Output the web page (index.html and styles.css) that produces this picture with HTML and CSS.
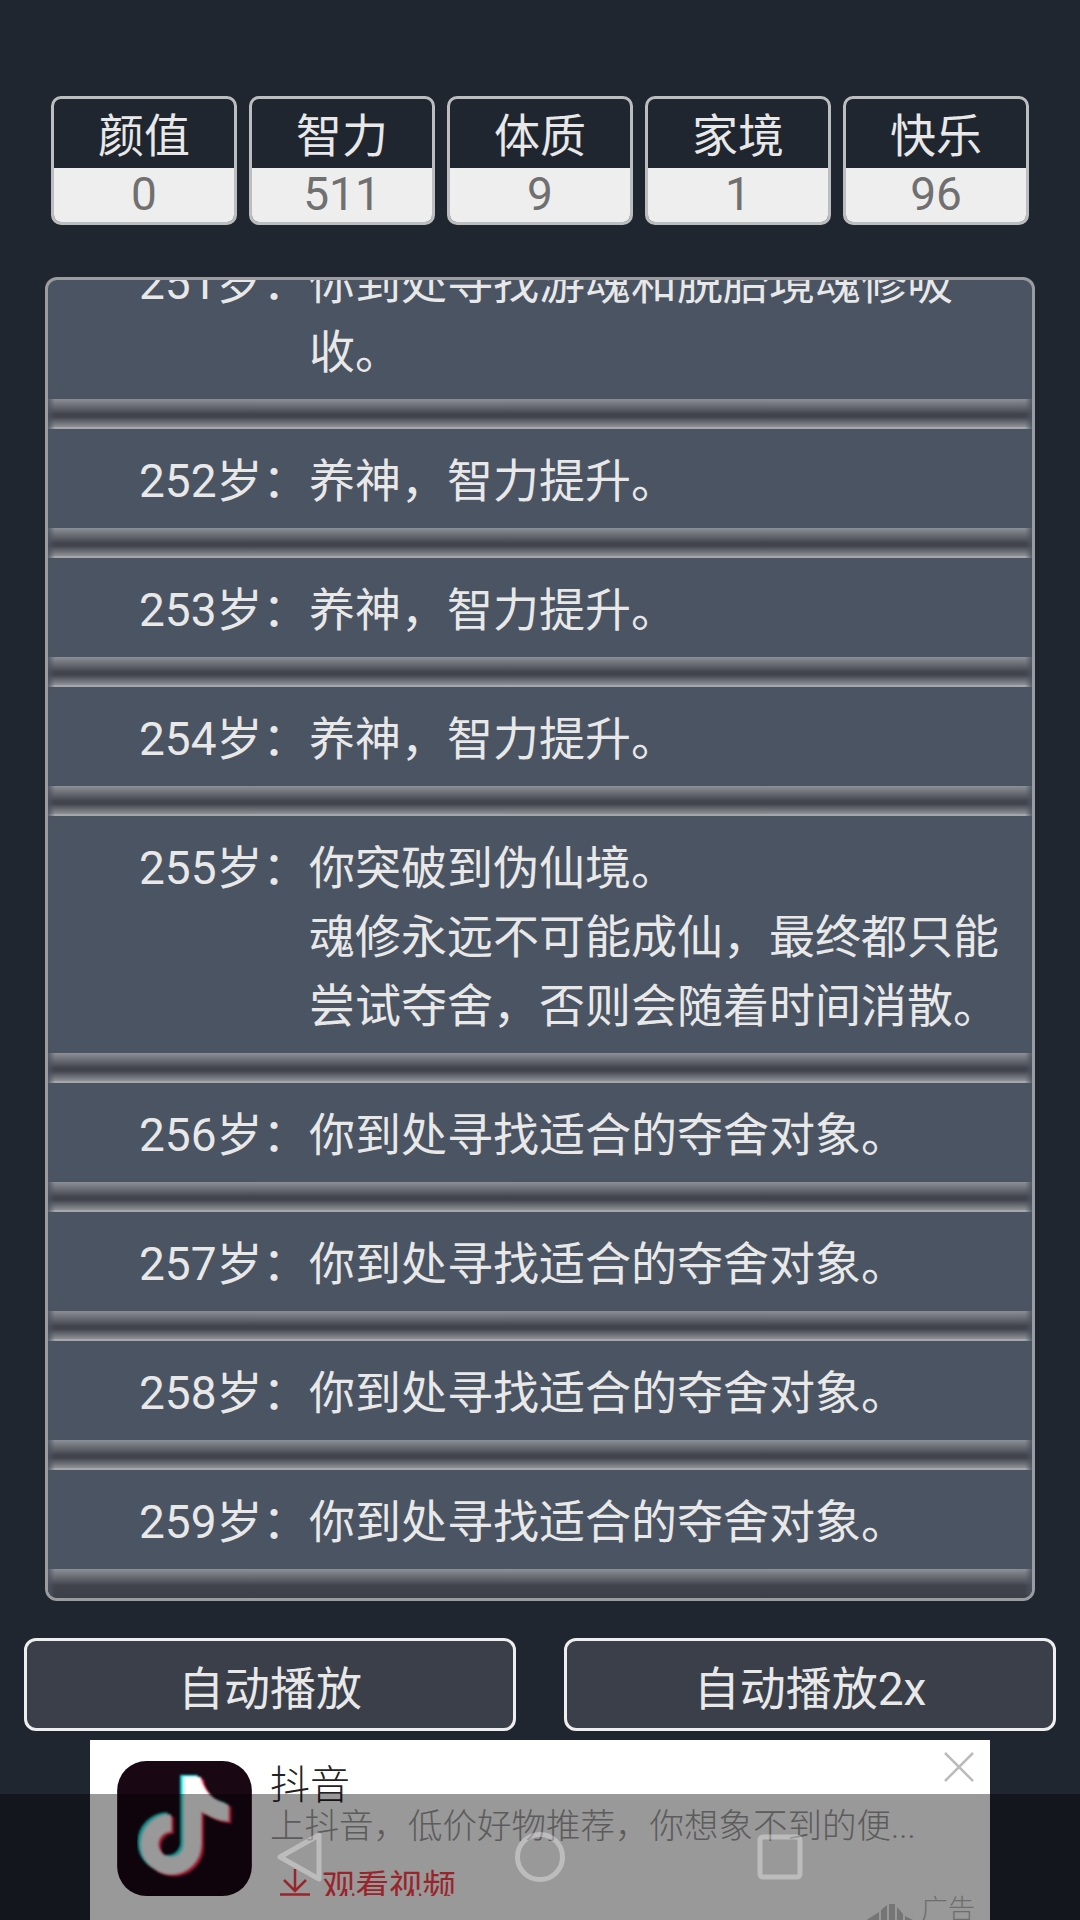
FILE: index.html
```html
<!DOCTYPE html>
<html lang="zh-CN">
<head>
<meta charset="utf-8">
<meta name="viewport" content="initial-scale=1">
<title>人生重开</title>
<link rel="stylesheet" href="styles.css">
</head>
<body>
<div class="screen">

<div class="game">
    <div class="stats">
        <div class="stat"><div class="stat-name">颜值</div><div class="stat-value">0</div></div>
        <div class="stat"><div class="stat-name">智力</div><div class="stat-value">511</div></div>
        <div class="stat"><div class="stat-name">体质</div><div class="stat-value">9</div></div>
        <div class="stat"><div class="stat-name">家境</div><div class="stat-value">1</div></div>
        <div class="stat"><div class="stat-name">快乐</div><div class="stat-value">96</div></div>
    </div>

    <div class="log">
        <ul class="log-list">
            <li><span class="age">251岁：</span><span class="event">你到处寻找游魂和脱胎境魂修吸收。</span></li>
            <li><span class="age">252岁：</span><span class="event">养神，智力提升。</span></li>
            <li><span class="age">253岁：</span><span class="event">养神，智力提升。</span></li>
            <li><span class="age">254岁：</span><span class="event">养神，智力提升。</span></li>
            <li><span class="age">255岁：</span><span class="event">你突破到伪仙境。<br>魂修永远不可能成仙，最终都只能尝试夺舍，否则会随着时间消散。</span></li>
            <li><span class="age">256岁：</span><span class="event">你到处寻找适合的夺舍对象。</span></li>
            <li><span class="age">257岁：</span><span class="event">你到处寻找适合的夺舍对象。</span></li>
            <li><span class="age">258岁：</span><span class="event">你到处寻找适合的夺舍对象。</span></li>
            <li><span class="age">259岁：</span><span class="event">你到处寻找适合的夺舍对象。</span></li>
        </ul>
    </div>

    <div class="buttons">
        <button class="btn" type="button">自动播放</button>
        <button class="btn" type="button">自动播放2x</button>
    </div>
</div>

<div class="ad">
    <svg class="ad-icon" viewBox="0 0 403 404">
        <defs>
            <filter id="soft"><feGaussianBlur stdDeviation="3"></feGaussianBlur></filter>
            <g id="note">
                <path d="M225 48V249A64 64 0 1 1 161 185" fill="none" stroke-width="52"></path>
                <path d="M248 48C258 92 292 122 333 130V180C300 178 275 165 248 150Z" stroke="none"></path>
            </g>
        </defs>
        <rect width="403" height="404" rx="88" fill="#1a0714"></rect>
        <g filter="url(#soft)">
            <use href="#note" x="-10" y="-6" fill="#25f4ee" stroke="#25f4ee"></use>
            <use href="#note" x="9" y="7" fill="#fe2c55" stroke="#fe2c55"></use>
            <use href="#note" fill="#fff" stroke="#fff"></use>
        </g>
    </svg>
    <div class="ad-text">
        <div class="ad-title">抖音</div>
        <div class="ad-desc">上抖音，低价好物推荐，你想象不到的便...</div>
        <div class="ad-link">
            <svg class="ad-arrow" viewBox="0 0 30 27"><path d="M15 0V21M4 11L15 22L26 11M0 25.5H30" fill="none" stroke="#ff3e4a" stroke-width="2.5"></path></svg>
            观看视频
        </div>
    </div>
    <svg class="ad-close" viewBox="0 0 30 30"><path d="M1 1L29 29M29 1L1 29" stroke="#bbb" stroke-width="2.5"></path></svg>
    <div class="ad-mark">
        <svg class="ad-mark-logo" viewBox="0 0 50 20"><path d="M0 20L14 11V20ZM16 9L22 4V20H16ZM24 3L30 3V20H24ZM32 6L38 13V20H32ZM40 15L50 20H40Z" fill="#c4c4c4"></path></svg>
        广告
    </div>
</div>

<div class="navbar">
    <svg class="nav-icon" viewBox="0 0 60 60"><path d="M49 8V52L10 30Z" fill="none" stroke="#fff" stroke-opacity=".35" stroke-width="5" stroke-linejoin="round"></path></svg>
    <svg class="nav-icon" viewBox="0 0 60 60"><circle cx="30" cy="30" r="22.5" fill="none" stroke="#fff" stroke-opacity=".35" stroke-width="5"></circle></svg>
    <svg class="nav-icon" viewBox="0 0 60 60"><rect x="10" y="10" width="40" height="40" rx="3" fill="none" stroke="#fff" stroke-opacity=".35" stroke-width="5"></rect></svg>
</div>

</div>
</body>
</html>
```

FILE: styles.css
```css
body {
    margin: 0;
    font-family: Roboto, "Noto Sans CJK SC", sans-serif;
    background-color: #20262f;
}

.screen {
    position: relative;
    width: 1080px;
    height: 1920px;
    overflow: hidden;
}

.game {
    height: 1740px;
    padding-top: 96px;
    box-sizing: border-box;
}

/* top attribute cards */
.stats {
    display: flex;
    justify-content: center;
    gap: 12px;
}

.stat {
    width: 186px;
    height: 129px;
    box-sizing: border-box;
    border: 3px solid #bbbdbf;
    border-radius: 10px;
    overflow: hidden;
    text-align: center;
}

.stat-name {
    height: 69px;
    font-size: 46px;
    line-height: 75px;
    color: #e8e8e8;
}

.stat-value {
    height: 54px;
    font-size: 46px;
    line-height: 52px;
    color: #707070;
    background-color: #eee;
}

/* life log */
.log {
    width: 990px;
    height: 1324px;
    margin: 52px auto 0;
    box-sizing: border-box;
    border: 3px solid #9a9c9f;
    border-radius: 12px;
    background-color: #4b5463;
    overflow: hidden;
}

.log-list {
    list-style: none;
    margin: -49px 0 0;
    padding: 0;
}

.log-list li {
    display: flex;
    flex-wrap: wrap;
    font-size: 46px;
    line-height: 69px;
    color: #e8e8e8;
}

.log-list li::after {
    content: "";
    width: 100%;
    height: 30px;
    margin-top: 12px;
    background:
        linear-gradient(to right, rgba(75, 84, 99, .85), rgba(75, 84, 99, 0) 7px, rgba(75, 84, 99, 0) calc(100% - 7px), rgba(75, 84, 99, .85)),
        linear-gradient(to bottom, #8d9095, #41444d 50%, #41444d 60%, #8d9095 93%, #a5a7ab 93%);
}

.log-list li:last-child::after {
    background:
        linear-gradient(to right, rgba(75, 84, 99, .85), rgba(75, 84, 99, 0) 7px, rgba(75, 84, 99, 0) calc(100% - 7px), rgba(75, 84, 99, .85)),
        linear-gradient(to bottom, #8d9095, #41444d 55%, #3c3f48);
}

.age {
    width: 170px;
    margin: 18px 0 0 91px;
    white-space: nowrap;
}

.event {
    width: 690px;
    margin-top: 18px;
}

/* auto play */
.buttons {
    display: flex;
    justify-content: space-between;
    margin: 37px 24px 0;
}

.btn {
    width: 492px;
    height: 93px;
    padding: 0;
    border: 3px solid #eee;
    border-radius: 12px;
    background-color: #3a3f49;
    color: #e8e8e8;
    font-family: inherit;
    font-size: 46px;
}

/* banner ad */
.ad {
    position: relative;
    display: flex;
    gap: 18px;
    width: 900px;
    height: 180px;
    margin: 0 auto;
    padding: 21px 27px 0;
    box-sizing: border-box;
    background-color: #fff;
    overflow: hidden;
}

.ad-icon {
    flex: none;
    width: 135px;
    height: 135px;
}

.ad-text {
    height: 135px;
    overflow: hidden;
}

.ad-title {
    padding-top: 1px;
    font-size: 40px;
    font-weight: 300;
    line-height: 47px;
    color: #222;
}

.ad-desc {
    font-size: 34.5px;
    font-weight: 300;
    line-height: 34px;
    color: #999;
    white-space: nowrap;
}

.ad-link {
    display: flex;
    align-items: flex-start;
    margin-top: 24px;
    padding-left: 10px;
    font-size: 33.5px;
    line-height: 40px;
    color: #ff3e4a;
}

.ad-arrow {
    flex: none;
    width: 30px;
    height: 27px;
    margin: 2px 12px 0 0;
}

.ad-close {
    position: absolute;
    top: 12px;
    right: 16px;
    width: 30px;
    height: 30px;
}

.ad-mark {
    position: absolute;
    top: 155px;
    right: 15px;
    display: flex;
    align-items: flex-start;
    gap: 6px;
    font-size: 27px;
    font-weight: 300;
    line-height: 30px;
    color: #b8b8b8;
}

.ad-mark-logo {
    width: 50px;
    height: 20px;
    margin-top: 6px;
}

/* system bar drawn over everything */
.navbar {
    position: absolute;
    left: 0;
    right: 0;
    bottom: 0;
    height: 126px;
    display: flex;
    justify-content: center;
    background-color: rgba(0, 0, 0, 0.4);
}

.nav-icon {
    width: 60px;
    height: 60px;
    margin: 33px 90px 0;
}
```
